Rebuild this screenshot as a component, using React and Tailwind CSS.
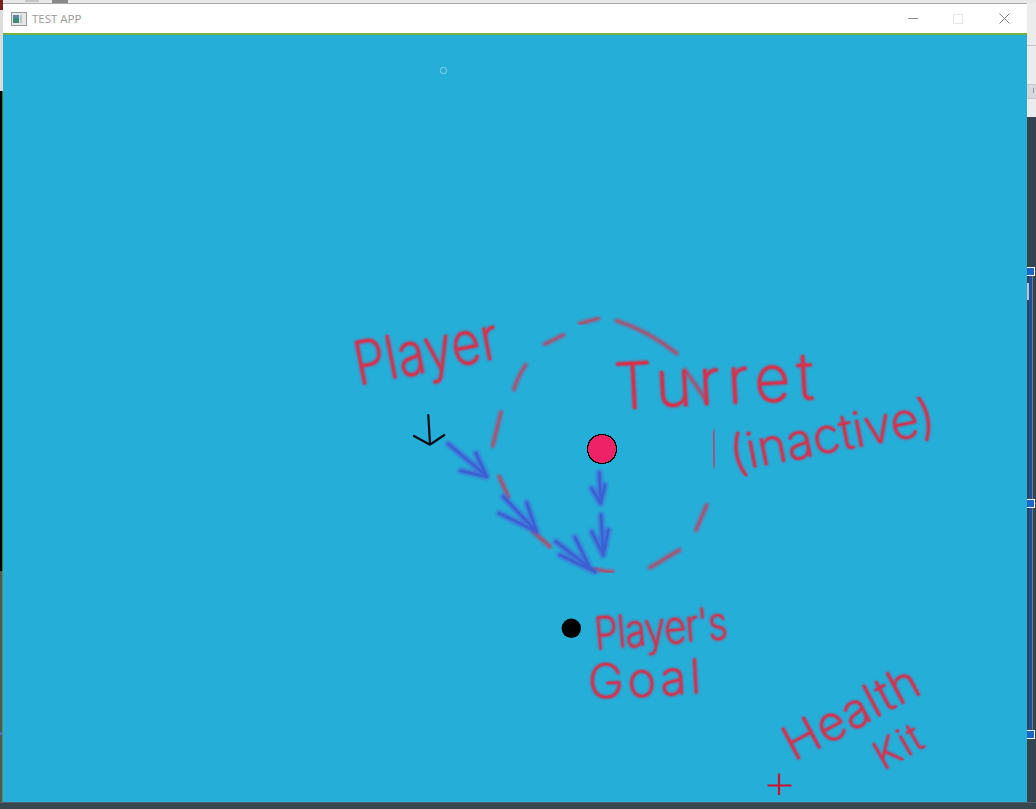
const Handle = () => <div className="w-[8px] h-[9px] bg-[#1c66c8] border border-l-0 border-white relative" />;

// rough brush look for the strokes on the canvas
const RedStroke = ({ d }) => (
  <g fill="none" strokeLinecap="round" strokeLinejoin="round">
    <path d={d} stroke="#b4486c" strokeWidth="5" opacity="0.7" filter="url(#soft)" />
    <path d={d} stroke="#d8344a" strokeWidth="1.2" opacity="0.55" />
  </g>
);

const BlueStroke = ({ d }) => (
  <g fill="none" strokeLinecap="round" strokeLinejoin="round">
    <path d={d} stroke="#4a62d8" strokeWidth="6.5" opacity="0.7" filter="url(#soft)" />
    <path d={d} stroke="#3a50d0" strokeWidth="2.5" opacity="0.6" />
  </g>
);

const circleDashes = [
  "M492.7 445.7 L501 412.3",
  "M514 389.3 Q518 376 525.7 365",
  "M545 344 L563.3 335",
  "M580 323.3 L598.3 318.3",
  "M616.7 320.7 Q648 331 676.7 353.3",
  "M685 370 Q696 385 706 400",
  "M713.3 431.7 L714.3 465.7",
  "M706.7 505 L696 530",
  "M679.3 550 L650 567.7",
  "M595 568.3 Q603 572 612.7 571.7",
  "M550 546.7 L533.3 531.7",
  "M499.3 476.7 L508.3 496.7",
];

const blueArrows = [
  "M448.3 444 L486.7 476 M476 453.3 L486.7 476.7 L460.7 470.7",
  "M503.3 496.7 L536.7 531.7 M526.7 502.7 L536.7 531.7 L499.3 513.3",
  "M556 541.7 L595 571.7 M575 537.3 L590 568.3 M560 555 L595 571.7",
  "M599.3 472.7 L600.7 503.3 M591.7 488.3 L600.7 503.3 L605 485",
  "M601 515 L603.3 555 M591.7 531.7 L603.3 555 L608.3 530",
];

const labelBase =
  "absolute whitespace-nowrap leading-none font-['Inter',sans-serif] font-extralight text-[#d8304a] [text-shadow:0_0_2px_#b0486c,0_0_2px_#b0486c,0_0_3px_#b0486c] blur-[0.5px]";

export default function App() {
  return (
    <div className="flex flex-col w-[1036px] h-[809px] overflow-hidden bg-[#34444c]">
      {/* stuff behind the window, top edge */}
      <div className="flex h-[3px] shrink-0 bg-[#e8e8e8]">
        <div className="w-[3px] bg-[#7a1f1f]" />
        <div className="ml-[22px] w-[14px] h-[2px] bg-[#c4c4c4]" />
        <div className="ml-[13px] w-[16px] bg-[#8a8a8a]" />
      </div>

      <div className="flex flex-1 min-h-0">
        {/* left edge */}
        <div className="flex flex-col w-[3px] shrink-0">
          <div className="h-[7px] bg-[#7a1f1f]" />
          <div className="h-[81px] bg-[#dcdcdc]" />
          <div className="h-[480px] bg-black border-r border-[#3f7a2c]" />
          <div className="flex-1 flex flex-col justify-center bg-[#4a5a58] border-r border-[#6a8a50]">
            <div className="mt-[94px] h-[3px] bg-[#4a6ad0]" />
          </div>
        </div>

        {/* window */}
        <div className="flex flex-col w-[1024px] shrink-0">
          <div className="flex items-center h-[32px] shrink-0 bg-white border-t border-[#a8a8a8] border-b-2 border-b-[#7cae3c] pl-[8px] pr-[17px]">
            <svg width="16" height="14" viewBox="0 0 16 14" className="shrink-0">
              <rect x="0.5" y="0.5" width="15" height="13" fill="#e4e8e8" stroke="#9a9a9a" />
              <rect x="2" y="3" width="6" height="8" fill="#3f8a78" />
              <rect x="2" y="3" width="6" height="3" fill="#5a8aa0" />
              <rect x="9" y="3" width="2" height="8" fill="#b8c4c4" />
            </svg>
            <span className="ml-[5px] text-[11.5px] text-[#9a9a9a] font-['Open_Sans',sans-serif]">TEST APP</span>
            <div className="ml-auto flex items-center gap-[35px]">
              <div className="w-[10px] h-px bg-[#8c8c8c]" />
              <div className="w-[10px] h-[10px] mr-px border border-[#e6e6e6]" />
              <svg width="11" height="11" viewBox="0 0 11 11">
                <path d="M0.5 0.5 L10.5 10.5 M10.5 0.5 L0.5 10.5" stroke="#808080" strokeWidth="1" fill="none" />
              </svg>
            </div>
          </div>

          {/* game canvas, coordinates below are screen coordinates */}
          <div className="relative flex-1 bg-[#25aed8]">
            <svg viewBox="3 35 1024 767" className="absolute inset-0 w-full h-full">
              <defs>
                <filter id="soft" x="-30%" y="-30%" width="160%" height="160%">
                  <feGaussianBlur stdDeviation="1" />
                </filter>
              </defs>
              <circle cx="443.5" cy="70.5" r="3.2" fill="none" stroke="#8ed2e6" strokeWidth="1" />
              {circleDashes.map((d) => (
                <RedStroke key={d} d={d} />
              ))}
              {blueArrows.map((d) => (
                <BlueStroke key={d} d={d} />
              ))}
              <path
                d="M428.3 415 L430 444 M414 436 L430 444.7 L444.3 435"
                fill="none"
                stroke="#0a0a14"
                strokeWidth="2.2"
                strokeLinecap="round"
                strokeLinejoin="round"
              />
              <circle cx="602" cy="449" r="14.5" fill="#ee2266" stroke="#000" strokeWidth="1.3" shapeRendering="crispEdges" />
              <circle cx="571.3" cy="628.3" r="9.7" fill="#000" />
              <path d="M767.5 785.5 H791.5 M779 773.5 V795" stroke="#d0102a" strokeWidth="2.2" fill="none" />
            </svg>

            <div className={`${labelBase} left-[350px] top-[290px] text-[50px] tracking-[1px] rotate-[-11deg] scale-y-[1.2]`}>Player</div>
            <div className={`${labelBase} left-[611px] top-[315px] text-[62px] tracking-[7px] rotate-[-3deg] scale-y-[1.05]`}>Turret</div>
            <div className={`${labelBase} left-[725px] top-[375px] text-[49px] tracking-[0.5px] rotate-[-11deg]`}>(inactive)</div>
            <div className={`${labelBase} left-[591px] top-[573px] text-[38px] tracking-[-0.5px] rotate-[-5deg] scale-y-[1.2]`}>Player's</div>
            <div className={`${labelBase} left-[585px] top-[620px] text-[48px] tracking-[4px] rotate-[-3deg]`}>Goal</div>
            <div className={`${labelBase} left-[774px] top-[653px] text-[48px] tracking-[1px] rotate-[-28deg]`}>Health</div>
            <div className={`${labelBase} left-[870px] top-[691px] text-[40px] tracking-[2px] rotate-[-30deg]`}>Kit</div>
          </div>
        </div>

        {/* right edge with the selection handles of whatever is behind */}
        <div className="flex flex-col w-[9px] shrink-0">
          <div className="h-[114px] bg-[#ececec]">
            <div className="mt-[42px] h-px bg-[#c4c4c4]" />
            <div className="mt-[38px] h-[15px] bg-[#d8d8dc] border-y border-[#c8c8cc] pl-[6px] pt-[3px]">
              <div className="w-px h-[5px] bg-[#999]" />
            </div>
          </div>
          <div className="relative mt-[150px] h-[472px] flex flex-col justify-between">
            <div className="absolute left-[2px] top-0 w-[3px] h-full bg-[#1f4f9c]" />
            <div className="absolute left-[5px] top-0 w-px h-full bg-[#6a7c90]" />
            <div className="absolute left-0 top-[16px] w-[2px] h-[17px] bg-[#c4c4c4]" />
            <Handle />
            <Handle />
            <Handle />
          </div>
        </div>
      </div>

      <div className="h-[7px] shrink-0 bg-[#37474f] border-t border-[#55606a]" />
    </div>
  );
}
